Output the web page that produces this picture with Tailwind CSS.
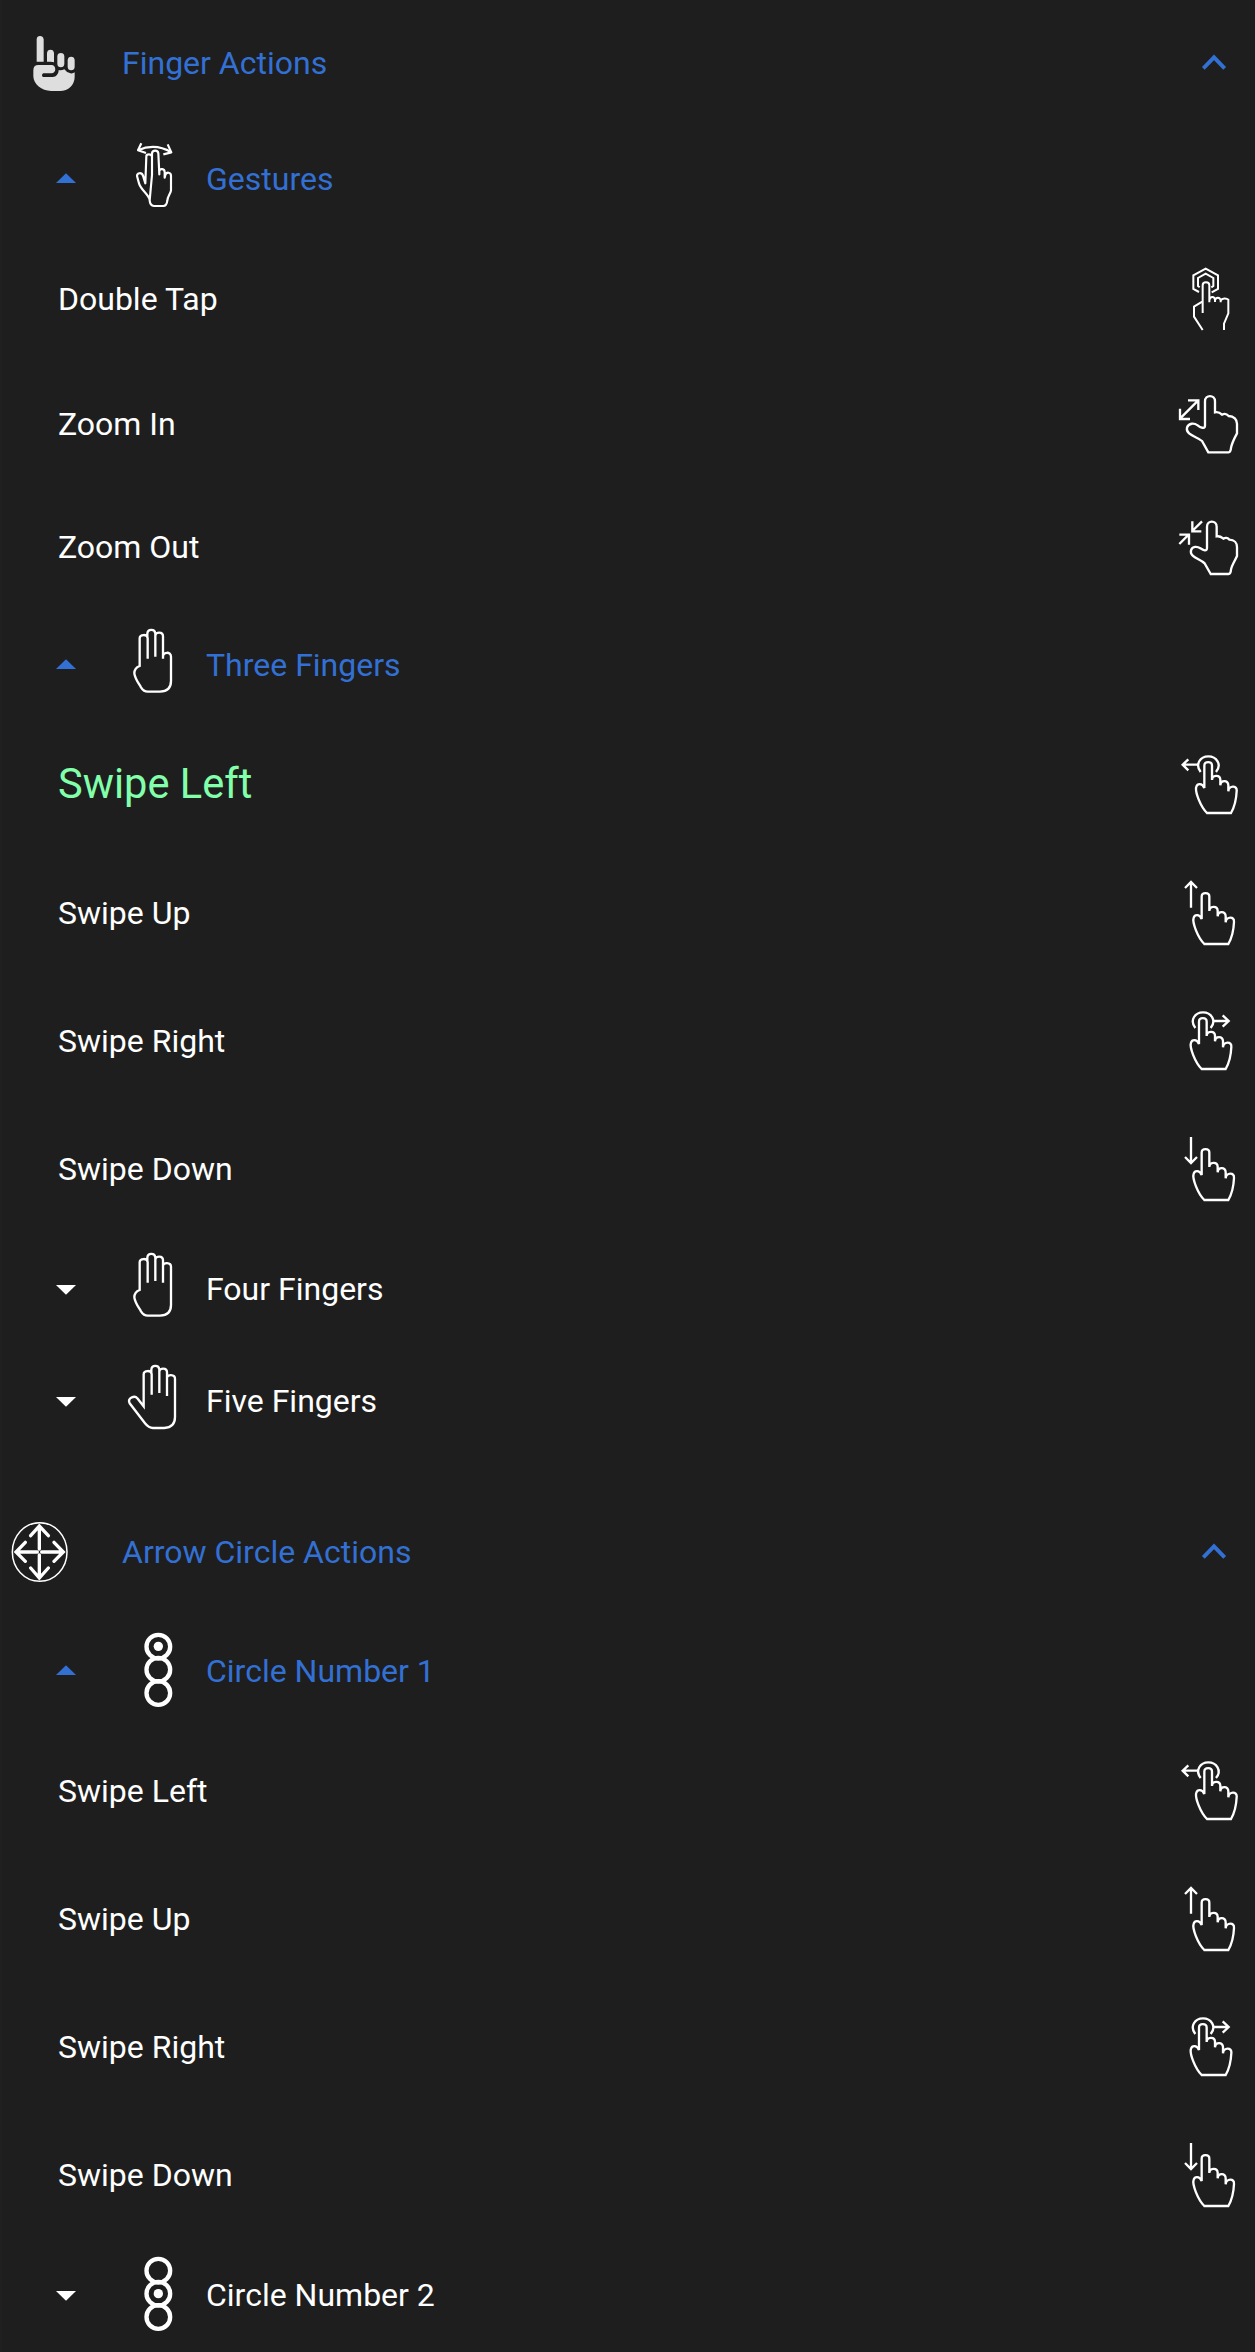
<!DOCTYPE html>
<html lang="en">
<head>
<meta charset="utf-8">
<title>Actions</title>
<script src="https://cdn.jsdelivr.net/npm/@tailwindcss/browser@4"></script>
</head>
<body class="bg-[#1e1e1e]">
<svg class="hidden">
  <defs>
    <path id="hand" d="M141 249C121 229 104 184 109 170C112 160 126 158 133 174V107C133 93 156 93 156 107V150C156 135 180 133 181 149V166C182 150 205 149 205 166V184C206 166 232 165 230 183C229 206 224 230 213 249Z"/>
    <path id="ring" d="M122 126C104 103 121 79 145 79S187 103 168 126"/>
    <path id="pinch" d="M145 607L126 573C112 560 76 555 81 533C86 518 103 519 113 526C121 533 135 538 135 527V454C135 433 165 433 165 454V487C175 485 180 488 186 494C193 490 200 491 206 498C222 498 231 509 231 521V550C223 565 215 580 213 594Q212 607 206 607Z"/>
    <g id="i-left"><use href="#hand"/><use href="#ring"/><path d="M115 104H68M85 88L68 104L85 121"/></g>
    <g id="i-up"><use href="#hand" x="-8" y="393"/><path d="M93 533V457M75 474L93 456L111 474"/></g>
    <g id="i-right"><use href="#hand" x="-16" y="-12"/><use href="#ring" x="-16" y="-12"/><path d="M160 93H206M188 76L206 93L188 110"/></g>
    <g id="i-down"><use href="#hand" x="-8" y="381"/><path d="M93 441V519M75 501L93 519L111 501"/></g>
    <path id="chev" d="M130 145L162 112L194 145" stroke="#3370d4" stroke-width="11.500" fill="none"/>
    <path id="tri-up" d="M168 132L198 103L228 132Z" fill="#3370d4"/>
    <path id="tri-down" d="M168 108H228L198 137Z" fill="#fff"/>
    <g id="circles" stroke-width="13"><circle cx="475" cy="440" r="35.500"/><circle cx="475" cy="509" r="35.500"/><circle cx="475" cy="579" r="35.500"/></g>
  </defs>
</svg>
<main class="w-[1255px] h-[2352px] overflow-hidden flex flex-col border-l-2 border-[#202020] text-white text-[32px] leading-none font-['Roboto',sans-serif] [&>*]:-ml-[2px] [&>*]:shrink-0 whitespace-nowrap">
  <header class="flex items-center h-[126px] text-[#3370d4]">
    <svg class="w-[80px] h-[80px] mr-[42px]" viewBox="0 69 240 240" fill="#dedede">
      <path d="M110 185V118Q111 108 120 108T131 118V185ZM141 185V159Q142 149 151.500 149T162 159V187Q158 185 152 185ZM172 169Q173 159 182.500 159T193 169V192Q192 202 182.500 202T172 192ZM203 180Q204 170 213.500 170T224 180V201Q223 211 213.500 211T203 201ZM100 211Q100 195 115 195H154C170 195 170 220 154 220H130Q126 221 126 226T130 231H158C169 231 176 221 176 210Q184 212 193 208Q201 219 211 220Q219 221 224 217V230C224 255 205 273 180 273H153C125 273 100 252 100 229Z"/>
    </svg>
    <span class="grow">Finger Actions</span>
    <svg class="w-[95px] h-[80px]" viewBox="0 9 285 240"><use href="#chev"/></svg>
  </header>

  <div class="flex items-center h-[106px] text-[#3370d4]">
    <svg class="w-[120px] h-[80px]" viewBox="0 0 360 240"><use href="#tri-up"/></svg>
    <svg class="w-[60px] h-[80px] mr-[26px]" viewBox="360 417 180 240" fill="none" stroke="#fff" stroke-width="6.500" stroke-linejoin="round">
      <path d="M449 601C449 585 423 571 417 550L411 528C411 518 425 516 429 527L436 550L439 469C439 461 453 461 456 469V523M456 525V460C457 449 474 449 475 460L478 523V513C480 504 494 506 494 516L494 533L496 525C499 515 513 516 513 527V571C512 580 502 590 502 602Q500 618 490 618H462Q450 617 449 601Z"/>
      <path d="M414 451Q465 428 514 457M424 430L414 451L438 459M503 433L514 457L490 463"/>
    </svg>
    <span>Gestures</span>
  </div>

  <div class="flex items-center h-[134px] pl-[58px]">
    <span class="grow">Double Tap</span>
    <svg class="w-[95px] h-[80px]" viewBox="0 27 285 240" fill="none" stroke="#fff" stroke-width="6">
      <path d="M117 126L100 117V76L137 56L174 76V117L155 127M119 112L114 108V84L137 71L160 84V108L154 112"/>
      <path d="M128 189V106C128 94 148 94 148 106V157M148 151C149 139 163 137 165 149V156M165 151C168 140 180 141 182 151V157M182 152C186 143 200 144 205 149V190L192 221V240M128 154L102 170V200L128 240"/>
    </svg>
  </div>
  <div class="flex items-center h-[116px] pl-[58px]">
    <span class="grow">Zoom In</span>
    <svg class="w-[95px] h-[80px]" viewBox="0 402 285 240" fill="none" stroke="#fff" stroke-width="7">
      <use href="#pinch"/><path d="M60 506L114 452M84 451H115V480M60 476V507H90"/>
    </svg>
  </div>
  <div class="flex items-center h-[130px] pl-[58px]">
    <span class="grow">Zoom Out</span>
    <svg class="w-[95px] h-[80px]" viewBox="0 771 285 240" fill="none" stroke="#fff" stroke-width="7">
      <path d="M152 972L134 940C121 926 88 922 93 901C97 888 112 889 121 895C130 901 141 905 141 894V830C141 810 170 810 170 830V859C181 857 184 861 190 866C196 862 204 863 208 869C224 869 231 880 231 891V918C224 934 215 946 213 959Q212 972 206 972Z"/>
      <path d="M126 814L97 843M97 814V844H124M58 882L86 854M58 854H87V884"/>
    </svg>
  </div>

  <div class="flex items-center h-[106px] text-[#3370d4]">
    <svg class="w-[120px] h-[80px]" viewBox="0 0 360 240"><use href="#tri-up"/></svg>
    <svg class="w-[60px] h-[80px] mr-[26px]" viewBox="360 45 180 240" fill="none" stroke="#fff" stroke-width="7">
      <path d="M443 146V84C443 72 419 72 419 85V168C408 172 403 179 403 190C405 206 416 220 423 232Q431 245 443 245H480Q513 244 513 213V140C513 124 489 125 489 140V146M489 146V79C489 64 466 65 466 78V140M466 78V70C464 56 443 56 442 71V84"/>
    </svg>
    <span>Three Fingers</span>
  </div>

  <div class="flex items-center h-[134px] pl-[58px]">
    <span class="grow text-[41.6px] text-[#82ffaa] -mt-[2px]">Swipe Left</span>
    <svg class="w-[95px] h-[80px]" viewBox="0 45 285 240" fill="none" stroke="#fff" stroke-width="7"><use href="#i-left"/></svg>
  </div>
  <div class="flex items-center h-[122px] pl-[58px]">
    <span class="grow">Swipe Up</span>
    <svg class="w-[95px] h-[80px]" viewBox="0 429 285 240" fill="none" stroke="#fff" stroke-width="7"><use href="#i-up"/></svg>
  </div>
  <div class="flex items-center h-[134px] pl-[58px]">
    <span class="grow">Swipe Right</span>
    <svg class="w-[95px] h-[80px]" viewBox="0 33 285 240" fill="none" stroke="#fff" stroke-width="7"><use href="#i-right"/></svg>
  </div>
  <div class="flex items-center h-[122px] pl-[58px]">
    <span class="grow">Swipe Down</span>
    <svg class="w-[95px] h-[80px]" viewBox="0 417 285 240" fill="none" stroke="#fff" stroke-width="7"><use href="#i-down"/></svg>
  </div>

  <div class="flex items-center h-[118px]">
    <svg class="w-[120px] h-[80px]" viewBox="0 0 360 240"><use href="#tri-down"/></svg>
    <svg class="w-[60px] h-[80px] mr-[26px]" viewBox="360 57 180 240" fill="none" stroke="#fff" stroke-width="7">
      <path d="M443 158V96C443 84 419 84 419 97V180C408 184 403 191 403 202C405 218 416 232 423 244Q431 257 443 257H480Q513 256 513 225V110C513 96 489 96 489 108M489 158V91C489 76 466 77 466 90V153M466 90V82C464 68 443 68 442 83V96"/>
    </svg>
    <span>Four Fingers</span>
  </div>
  <div class="flex items-center h-[106px]">
    <svg class="w-[120px] h-[80px]" viewBox="0 0 360 240"><use href="#tri-down"/></svg>
    <svg class="w-[60px] h-[80px] mr-[26px]" viewBox="360 393 180 240" fill="none" stroke="#fff" stroke-width="7">
      <path d="M455 494V432C455 420 431 420 431 433V529L412 505C404 494 381 505 389 520L435 580Q446 594 459 594H493Q525 592 525 561V446C525 432 501 432 501 444M501 498V427C501 412 478 413 478 426V489M478 426V418C476 404 455 404 454 419V432"/>
    </svg>
    <span>Five Fingers</span>
  </div>

  <header class="flex items-center h-[104px] mt-[46px] text-[#3370d4]">
    <svg class="w-[80px] h-[80px] mr-[42px]" viewBox="0 36 240 240" fill="none" stroke="#fff" stroke-width="10" stroke-linecap="round">
      <ellipse cx="119" cy="156" rx="82" ry="88" stroke-width="4.500"/>
      <path d="M118 147V78M92 107L118 78L145 107M118 165V234M92 204L118 234L145 204M112 156H48M76 127L48 156L76 184M125 156H189M162 127L190 156L162 184"/>
    </svg>
    <span class="grow">Arrow Circle Actions</span>
    <svg class="w-[95px] h-[80px]" viewBox="0 9 285 240"><use href="#chev"/></svg>
  </header>

  <div class="flex items-center h-[134px] text-[#3370d4]">
    <svg class="w-[120px] h-[80px]" viewBox="0 0 360 240"><use href="#tri-up"/></svg>
    <svg class="w-[60px] h-[80px] mr-[26px]" viewBox="360 393 180 240" fill="none" stroke="#fff"><use href="#circles"/><circle cx="475" cy="439" r="14" fill="#fff" stroke="none"/></svg>
    <span>Circle Number 1</span>
  </div>

  <div class="flex items-center h-[106px] pl-[58px]">
    <span class="grow">Swipe Left</span>
    <svg class="w-[95px] h-[80px]" viewBox="0 45 285 240" fill="none" stroke="#fff" stroke-width="7"><use href="#i-left"/></svg>
  </div>
  <div class="flex items-center h-[150px] pl-[58px]">
    <span class="grow">Swipe Up</span>
    <svg class="w-[95px] h-[80px]" viewBox="0 429 285 240" fill="none" stroke="#fff" stroke-width="7"><use href="#i-up"/></svg>
  </div>
  <div class="flex items-center h-[106px] pl-[58px]">
    <span class="grow">Swipe Right</span>
    <svg class="w-[95px] h-[80px]" viewBox="0 33 285 240" fill="none" stroke="#fff" stroke-width="7"><use href="#i-right"/></svg>
  </div>
  <div class="flex items-center h-[150px] pl-[58px]">
    <span class="grow">Swipe Down</span>
    <svg class="w-[95px] h-[80px]" viewBox="0 417 285 240" fill="none" stroke="#fff" stroke-width="7"><use href="#i-down"/></svg>
  </div>

  <div class="flex items-center h-[90px]">
    <svg class="w-[120px] h-[80px]" viewBox="0 0 360 240"><use href="#tri-down"/></svg>
    <svg class="w-[60px] h-[80px] mr-[26px]" viewBox="360 393 180 240" fill="none" stroke="#fff"><use href="#circles"/><circle cx="475" cy="509" r="14" fill="#fff" stroke="none"/></svg>
    <span>Circle Number 2</span>
  </div>
</main>
</body>
</html>
